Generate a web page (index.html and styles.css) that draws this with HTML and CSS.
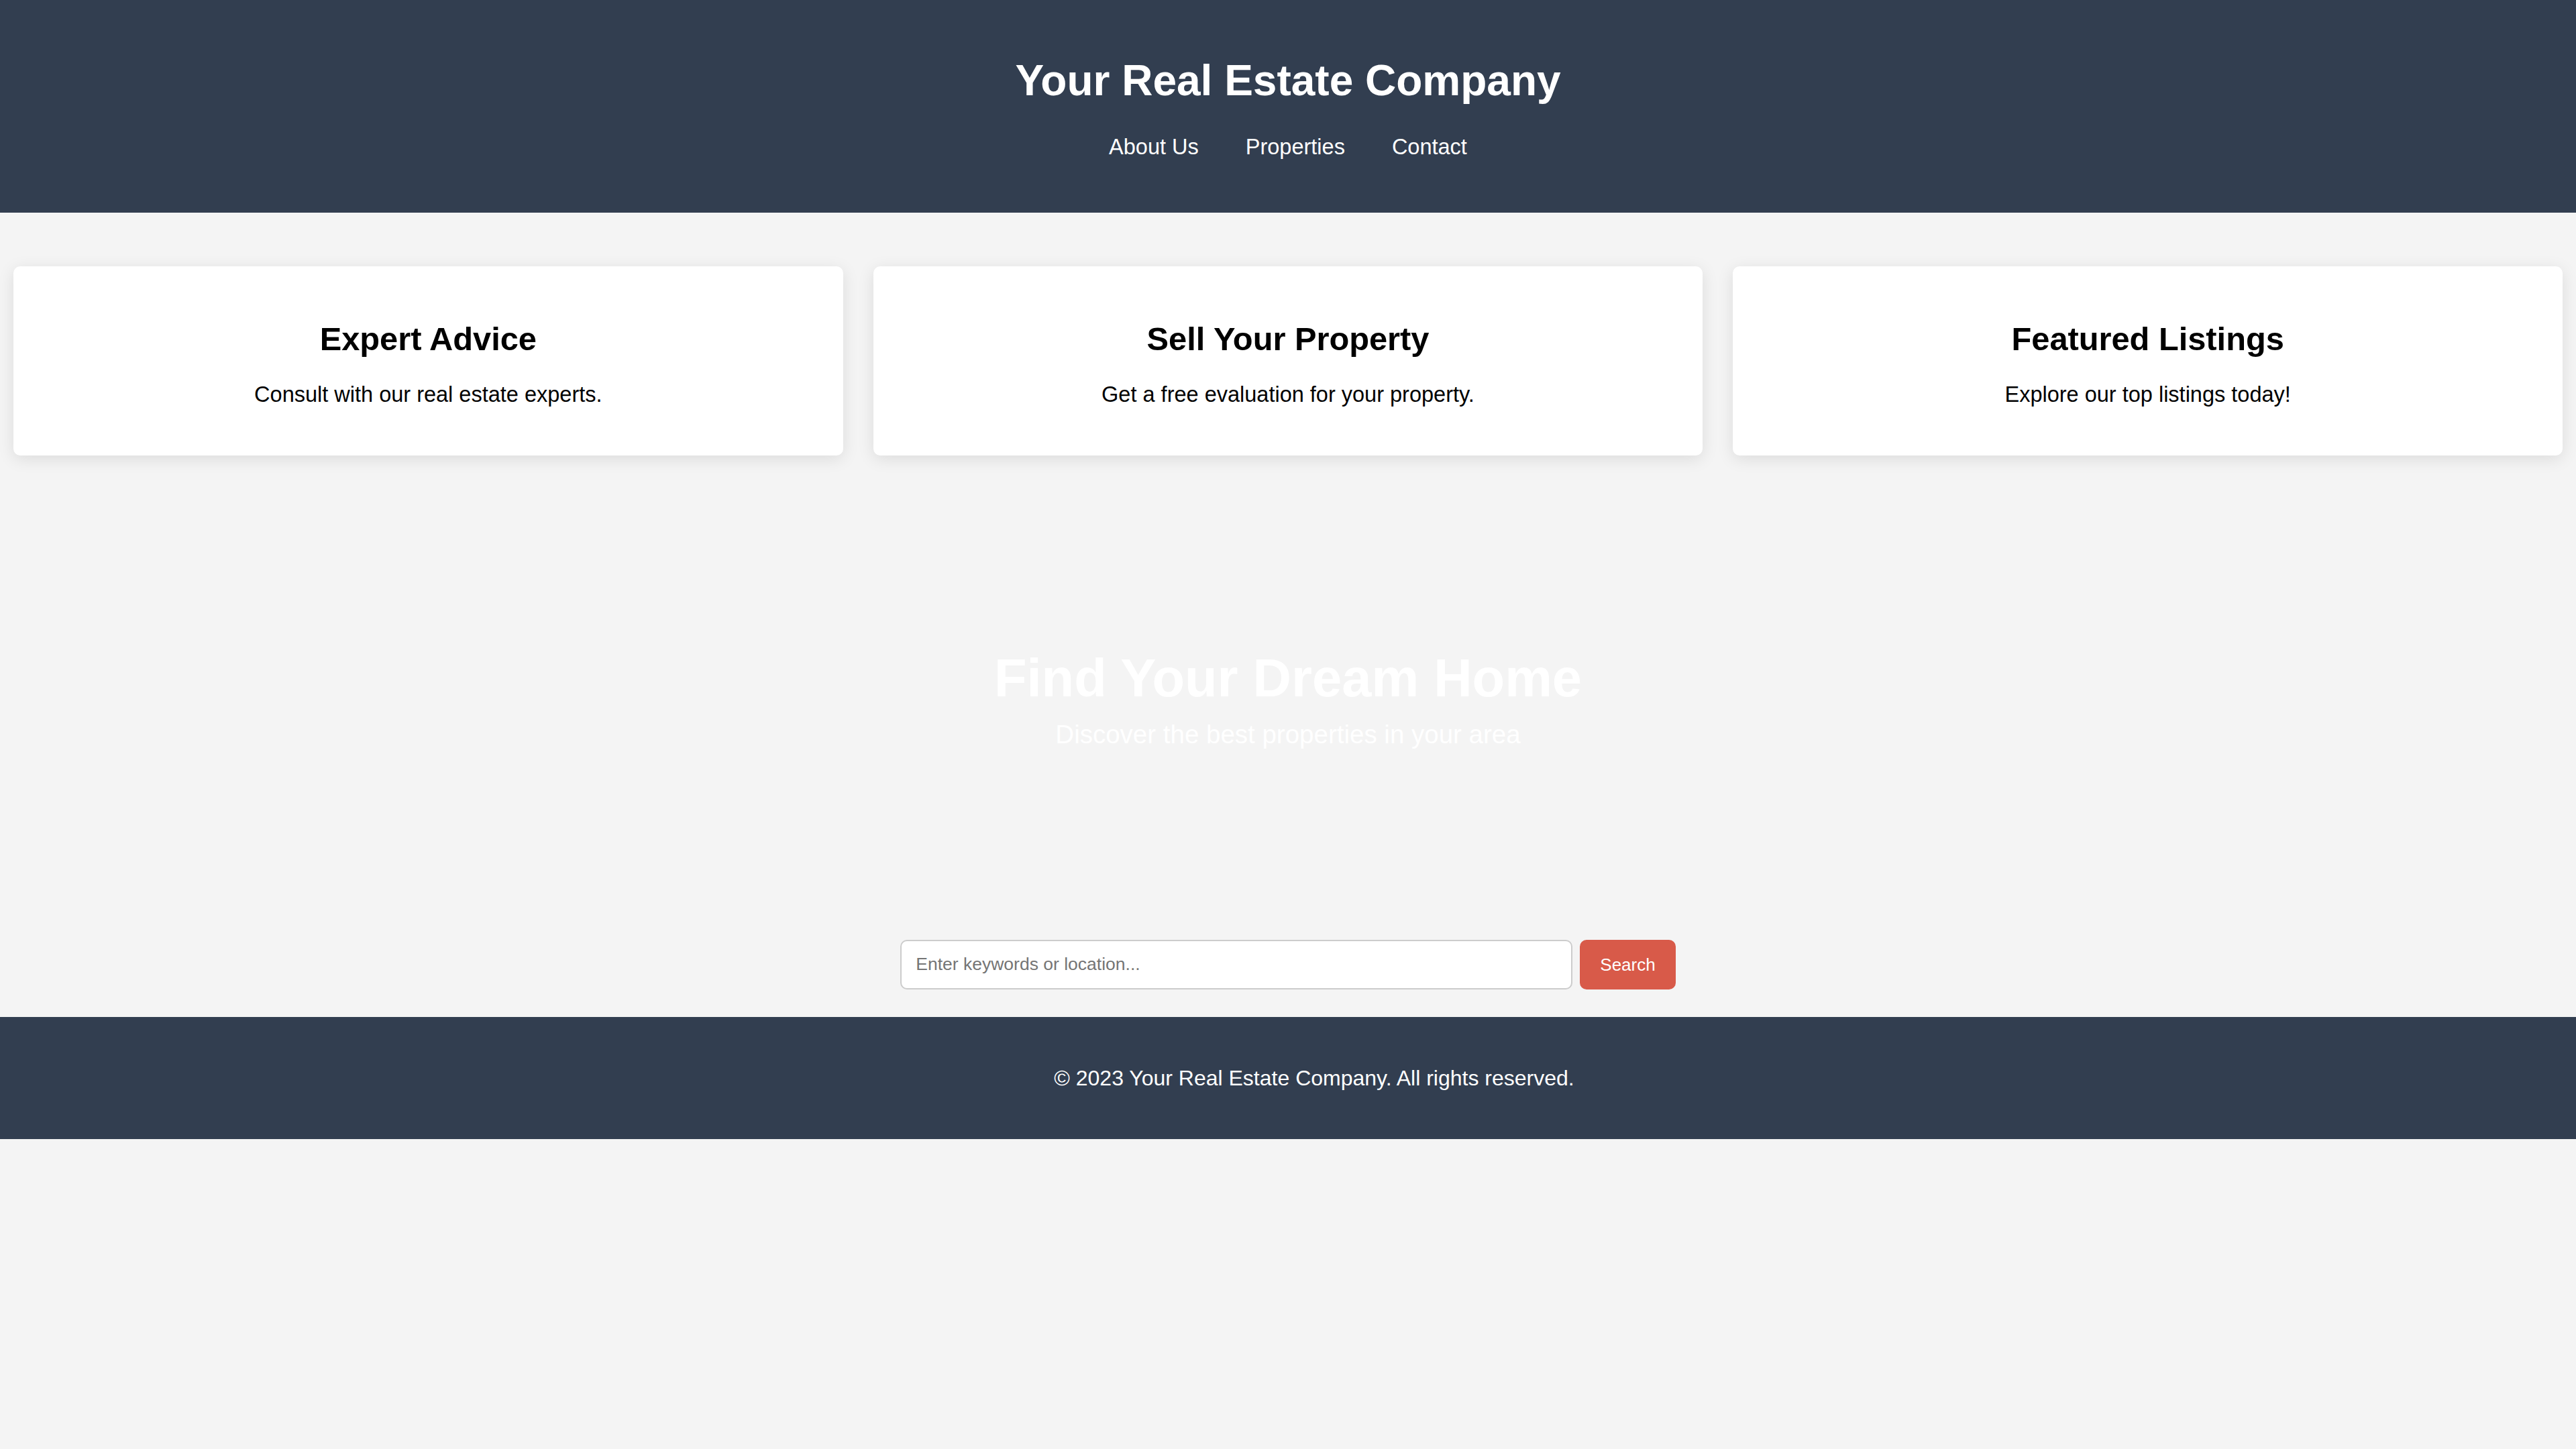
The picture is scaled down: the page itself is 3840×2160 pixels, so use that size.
FILE: index.html
```html
<!DOCTYPE html>
<html lang="en">
<head>
<meta charset="utf-8">
<title>Your Real Estate Company</title>
<link rel="stylesheet" href="styles.css">
</head>
<body>
<header class="site-header">
  <h1 class="site-title">Your Real Estate Company</h1>
  <nav>
    <ul class="nav-list">
      <li><a class="nav-link" href="#">About Us</a></li>
      <li><a class="nav-link" href="#">Properties</a></li>
      <li><a class="nav-link" href="#">Contact</a></li>
    </ul>
  </nav>
</header>

<section class="features">
  <div class="card">
    <h2 class="card-title">Expert Advice</h2>
    <p class="card-text">Consult with our real estate experts.</p>
  </div>
  <div class="card">
    <h2 class="card-title">Sell Your Property</h2>
    <p class="card-text">Get a free evaluation for your property.</p>
  </div>
  <div class="card">
    <h2 class="card-title">Featured Listings</h2>
    <p class="card-text">Explore our top listings today!</p>
  </div>
</section>

<section class="hero">
  <h2 class="hero-title">Find Your Dream Home</h2>
  <p class="hero-sub">Discover the best properties in your area</p>
</section>

<section class="search">
  <form class="search-form">
    <input class="search-input" type="text" placeholder="Enter keywords or location...">
    <button class="search-btn" type="button">Search</button>
  </form>
</section>

<footer class="site-footer">
  <p class="footer-text">&copy; 2023 Your Real Estate Company. All rights reserved.</p>
</footer>
</body>
</html>
```

FILE: styles.css
```css
html, body {
  margin: 0;
  padding: 0;
}

body {
  background: #f4f4f4;
  font-family: "Liberation Sans", Arial, Helvetica, sans-serif;
  font-size: 32.5px;
  color: #000;
}

.site-header {
  background: #323e50;
  color: #fff;
  text-align: center;
  padding: 40px 0 40px;
}

.site-title {
  font-size: 64px;
  font-weight: 700;
  margin: 42.5px 0 43.5px;
  line-height: 74.7px;
}

.nav-list {
  list-style: none;
  margin: 0 0 39px;
  padding: 0;
  display: flex;
  justify-content: center;
  gap: 70px;
}

.nav-link {
  color: #fff;
  text-decoration: none;
  font-size: 32.5px;
}

.features {
  display: grid;
  grid-template-columns: repeat(3, 1fr);
  gap: 45px;
  padding: 80px 20px 40px;
}

.card {
  background: #fff;
  border-radius: 10px;
  box-shadow: 0 5px 25px rgba(0, 0, 0, 0.1);
  padding: 40px;
  text-align: center;
}

.card-title {
  font-size: 48.75px;
  font-weight: 700;
  margin: 40px 0 37px;
}

.card-text {
  margin: 0 0 32px;
  font-size: 32.5px;
}

.hero {
  text-align: center;
  color: #fff;
  padding: 245px 20px 244px;
}

.hero-title {
  font-size: 79.5px;
  font-weight: 700;
  line-height: 93px;
  margin: 0 0 16.5px;
}

.hero-sub {
  font-size: 38.5px;
  line-height: 44.8px;
  margin: 0;
}

.search {
  padding: 39px 0 41px;
}

.search-form {
  display: flex;
  justify-content: center;
  gap: 11px;
  margin: 0;
}

.search-input {
  box-sizing: border-box;
  width: 1002px;
  height: 73.5px;
  border: 2px solid #cccccc;
  border-radius: 10px;
  padding: 0 21px;
  font-family: "Liberation Sans", Arial, sans-serif;
  font-size: 26.5px;
  background: #fff;
  color: #333;
}

.search-input::placeholder {
  color: #757575;
}

.search-btn {
  box-sizing: border-box;
  height: 74px;
  padding: 0 30px;
  border: none;
  border-radius: 10px;
  background: #d85a49;
  color: #fff;
  font-family: "Liberation Sans", Arial, sans-serif;
  font-size: 26px;
}

.site-footer {
  background: #323e50;
  color: #fff;
  text-align: center;
  padding: 40px 0 40px 78px;
}

.footer-text {
  margin: 32.5px 0;
  font-size: 32px;
  line-height: 37.4px;
}
```
